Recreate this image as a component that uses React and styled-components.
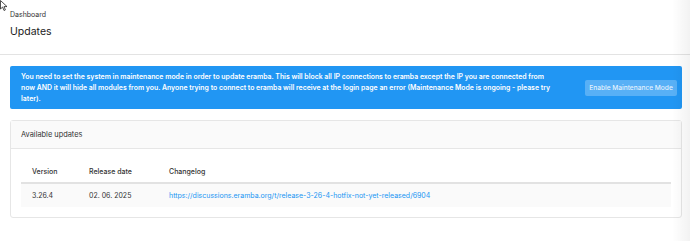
import React from 'react'
import styled, { createGlobalStyle } from 'styled-components'

const GlobalStyle = createGlobalStyle`
  body {
    margin: 0;
    background: #fff;
    font-family: Inter, "Noto Sans", sans-serif;
    color: #333;
  }
`

const Page = styled.div`
  position: relative;
  width: 690px;
  height: 241px;
  overflow: hidden;
`

const EdgeShade = styled.div`
  position: absolute;
  top: 0;
  right: 0;
  width: 18px;
  height: 100%;
  background: linear-gradient(to right, rgba(0, 0, 0, 0), rgba(0, 0, 0, 0.05));
  pointer-events: none;
`

const Cursor = styled.svg`
  position: absolute;
  top: 0;
  left: 0;
`

const PageHeader = styled.div`
  padding: 10px 10px 0;
  height: 44px;
  border-bottom: 1px solid #e3e3e3;
`

const Breadcrumb = styled.div`
  font-size: 7px;
  line-height: 10px;
  color: #333;
`

const Title = styled.h1`
  margin: 5px 0 0;
  font-size: 10.5px;
  line-height: 14px;
  font-weight: 400;
  color: #222;
`

const Content = styled.div`
  padding: 11px 8px 0 10px;
`

const Alert = styled.div`
  display: flex;
  align-items: center;
  background: #2196f3;
  border-radius: 2px;
  padding: 5px 5px 5px 11px;
  color: #fff;
`

const AlertText = styled.div`
  flex: 1;
  font-size: 6.9px;
  line-height: 11px;
  font-weight: 600;
  padding-right: 30px;
`

const AlertButton = styled.button`
  border: 0;
  border-radius: 2px;
  background: rgba(255, 255, 255, 0.25);
  color: rgba(255, 255, 255, 0.85);
  font-family: inherit;
  font-size: 6.6px;
  font-weight: 500;
  height: 16px;
  width: 92px;
  padding: 0;
  white-space: nowrap;
`

const Card = styled.div`
  margin-top: 11px;
  border: 1px solid #e6e6e6;
  border-radius: 3px;
  background: #fff;
`

const CardHeader = styled.div`
  height: 27px;
  display: flex;
  align-items: center;
  padding: 0 10px;
  background: #fafafa;
  border-bottom: 1px solid #e6e6e6;
  font-size: 7.4px;
  color: #333;
`

const CardBody = styled.div`
  padding: 12px 10px 10px;
`

const Table = styled.table`
  width: 100%;
  border-collapse: collapse;
  table-layout: fixed;
  font-size: 7px;
`

const Th = styled.th`
  width: ${({ w }) => (w ? `${w}px` : 'auto')};
  height: 21px;
  padding: 0 0 0 11px;
  text-align: left;
  font-weight: 500;
  color: #333;
  border-bottom: 2px solid #e2e2e2;
`

const Td = styled.td`
  height: 23px;
  padding: 0 0 0 11px;
  background: #fafafa;
  color: #333;
`

const Link = styled.a`
  color: #2196f3;
  text-decoration: none;
`

const updates = [
  {
    version: '3.26.4',
    date: '02. 06. 2025',
    url: 'https://discussions.eramba.org/t/release-3-26-4-hotfix-not-yet-released/6904'
  }
]

const App = () => {
  return (
    <Page>
      <GlobalStyle />
      <PageHeader>
        <Breadcrumb>Dashboard</Breadcrumb>
        <Title>Updates</Title>
      </PageHeader>
      <Content>
        <Alert>
          <AlertText>
            You need to set the system in maintenance mode in order to update eramba. This will block all IP connections to eramba except the IP you are connected from now AND it will hide all modules from you. Anyone trying to connect to eramba will receive at the login page an error (Maintenance Mode is ongoing - please try later).
          </AlertText>
          <AlertButton>Enable Maintenance Mode</AlertButton>
        </Alert>
        <Card>
          <CardHeader>Available updates</CardHeader>
          <CardBody>
            <Table>
              <thead>
                <tr>
                  <Th w={46}>Version</Th>
                  <Th w={69}>Release date</Th>
                  <Th>Changelog</Th>
                </tr>
              </thead>
              <tbody>
                {updates.map(u => (
                  <tr key={u.version}>
                    <Td>{u.version}</Td>
                    <Td>{u.date}</Td>
                    <Td><Link href={u.url}>{u.url}</Link></Td>
                  </tr>
                ))}
              </tbody>
            </Table>
          </CardBody>
        </Card>
      </Content>
      <EdgeShade />
      <Cursor width="8" height="12" viewBox="0 0 8 12">
        <path d="M0.5 0.5 L0.5 9 L2.6 7 L4 10.5 L5.4 9.9 L4 6.6 L7 6.6 Z" fill="#fff" stroke="#222" strokeWidth="0.8" />
      </Cursor>
    </Page>
  )
}

export default App
